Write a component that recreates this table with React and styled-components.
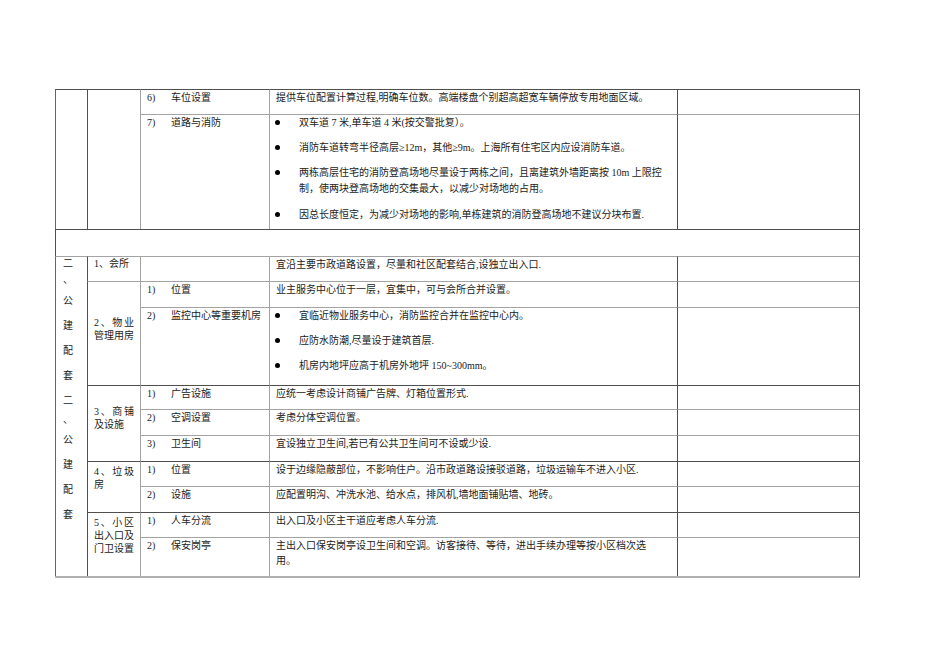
import React from 'react';
import styled, { createGlobalStyle } from 'styled-components';

const GlobalStyle = createGlobalStyle`
  html, body {
    margin: 0;
    padding: 0;
    background: #fff;
  }
`;

const DARK = '#4f4f4f';
const LIGHT = '#a3a3a3';

const Page = styled.div`
  width: 950px;
  height: 672px;
  box-sizing: border-box;
  padding: 89px 0 0 55px;
  font-family: "Liberation Serif", "Noto Sans CJK SC", serif;
  font-size: 10px;
  color: #222;
`;

const Sheet = styled.table`
  border-collapse: separate;
  border-spacing: 0;
  table-layout: fixed;
  width: 804px;
  border-right: 1px solid ${DARK};
  border-bottom: 2px solid #b0b0b0;
`;

const Row = styled.tr`
  height: ${(p) => p.$h}px;
`;

const Cell = styled.td`
  box-sizing: border-box;
  border-top: 1px solid ${(p) => (p.$lightTop ? LIGHT : DARK)};
  border-left: 1px solid ${(p) => (p.$lightLeft ? LIGHT : DARK)};
  padding: 0 6px;
  vertical-align: top;
  line-height: 15px;
  white-space: nowrap;
`;

const SideCell = styled(Cell)`
  padding: 0 0 0 7px;
  border-left-color: #666;
`;

const VChar = styled.span`
  display: block;
  height: ${(p) => p.$h}px;
  line-height: ${(p) => p.$h}px;
`;

const GroupCell = styled(Cell)`
  padding: ${(p) => p.$padTop || 0}px 6px 0 6px;
  line-height: 13px;
  white-space: normal;
  text-align: justify;
  text-justify: inter-character;
  text-align-last: left;
  word-break: break-all;
`;

const Item = styled.div`
  display: flex;
`;

const Num = styled.span`
  width: 24px;
  flex: none;
`;

const Bullets = styled.ul`
  list-style: none;
  margin: 0;
  padding: 0;
`;

const Bullet = styled.li`
  display: flex;
  align-items: flex-start;
  margin-bottom: 10px;

  &:last-child {
    margin-bottom: 0;
  }
`;

const Dot = styled.span`
  flex: none;
  width: 5px;
  height: 5px;
  border-radius: 50%;
  background: #000;
  margin: 5px 19px 0 -1px;
`;

const Lines = styled.span`
  line-height: ${(p) => p.$lh || 15}px;
`;

const Blank = styled(Cell)`
  padding: 0;
`;

const sideChars = [
  ['二', 13], ['、', 19], ['公', 24], ['建', 25], ['配', 25], ['套', 25],
  ['二', 25], ['、', 14], ['公', 25], ['建', 25], ['配', 25], ['套', 25],
];

const ItemLabel = ({ n, children }) => (
  <Item>
    <Num>{n}</Num>
    <span>{children}</span>
  </Item>
);

const BulletList = ({ items }) => (
  <Bullets>
    {items.map((t, i) => (
      <Bullet key={i}>
        <Dot />
        <span>{t}</span>
      </Bullet>
    ))}
  </Bullets>
);

export default function App() {
  return (
    <>
      <GlobalStyle />
      <Page>
        <Sheet>
          <colgroup>
            <col style={{ width: 32 }} />
            <col style={{ width: 53 }} />
            <col style={{ width: 129 }} />
            <col style={{ width: 408 }} />
            <col style={{ width: 182 }} />
          </colgroup>
          <tbody>
            <Row $h={25}>
              <SideCell rowSpan={2} />
              <Cell rowSpan={2} />
              <Cell $lightLeft><ItemLabel n="6)">车位设置</ItemLabel></Cell>
              <Cell $lightLeft>提供车位配置计算过程,明确车位数。高端楼盘个别超高超宽车辆停放专用地面区域。</Cell>
              <Cell />
            </Row>
            <Row $h={115}>
              <Cell $lightTop $lightLeft><ItemLabel n="7)">道路与消防</ItemLabel></Cell>
              <Cell $lightTop $lightLeft>
                <BulletList
                  items={[
                    '双车道 7 米,单车道 4 米(按交警批复）。',
                    '消防车道转弯半径高层≥12m，其他≥9m。上海所有住宅区内应设消防车道。',
                    <Lines $lh={16}>两栋高层住宅的消防登高场地尽量设于两栋之间，且离建筑外墙距离按 10m 上限控<br />制，使两块登高场地的交集最大，以减少对场地的占用。</Lines>,
                    '因总长度恒定，为减少对场地的影响,单栋建筑的消防登高场地不建议分块布置.',
                  ]}
                />
              </Cell>
              <Cell $lightTop />
            </Row>
            <Row $h={27}>
              <Blank colSpan={5} />
            </Row>

            <Row $h={25}>
              <SideCell rowSpan={10} $lightTop>
                {sideChars.map(([c, h], i) => (
                  <VChar key={i} $h={h}>{c}</VChar>
                ))}
              </SideCell>
              <GroupCell $lightTop>1、会所</GroupCell>
              <Cell $lightTop $lightLeft />
              <Cell $lightTop $lightLeft>宜沿主要市政道路设置，尽量和社区配套结合,设独立出入口.</Cell>
              <Cell $lightTop />
            </Row>
            <Row $h={26}>
              <GroupCell rowSpan={2} $padTop={34} $lightTop>2、物业管理用房</GroupCell>
              <Cell $lightTop $lightLeft><ItemLabel n="1)">位置</ItemLabel></Cell>
              <Cell $lightTop $lightLeft>业主服务中心位于一层，宜集中，可与会所合并设置。</Cell>
              <Cell $lightTop />
            </Row>
            <Row $h={78}>
              <Cell $lightTop $lightLeft><ItemLabel n="2)">监控中心等重要机房</ItemLabel></Cell>
              <Cell $lightTop $lightLeft>
                <BulletList
                  items={[
                    '宜临近物业服务中心，消防监控合并在监控中心内。',
                    '应防水防潮,尽量设于建筑首层.',
                    '机房内地坪应高于机房外地坪 150~300mm。',
                  ]}
                />
              </Cell>
              <Cell $lightTop />
            </Row>

            <Row $h={24}>
              <GroupCell rowSpan={3} $padTop={19}>3、商铺及设施</GroupCell>
              <Cell $lightLeft><ItemLabel n="1)">广告设施</ItemLabel></Cell>
              <Cell $lightLeft>应统一考虑设计商铺广告牌、灯箱位置形式.</Cell>
              <Cell />
            </Row>
            <Row $h={26}>
              <Cell $lightTop $lightLeft><ItemLabel n="2)">空调设置</ItemLabel></Cell>
              <Cell $lightTop $lightLeft>考虑分体空调位置。</Cell>
              <Cell $lightTop />
            </Row>
            <Row $h={26}>
              <Cell $lightTop $lightLeft><ItemLabel n="3)">卫生间</ItemLabel></Cell>
              <Cell $lightTop $lightLeft>宜设独立卫生间,若已有公共卫生间可不设或少设.</Cell>
              <Cell $lightTop />
            </Row>

            <Row $h={25}>
              <GroupCell rowSpan={2} $padTop={3}>4、垃圾房</GroupCell>
              <Cell $lightLeft><ItemLabel n="1)">位置</ItemLabel></Cell>
              <Cell $lightLeft>设于边缘隐蔽部位，不影响住户。沿市政道路设接驳道路，垃圾运输车不进入小区.</Cell>
              <Cell />
            </Row>
            <Row $h={26}>
              <Cell $lightTop $lightLeft><ItemLabel n="2)">设施</ItemLabel></Cell>
              <Cell $lightTop $lightLeft>应配置明沟、冲洗水池、给水点，排风机,墙地面铺贴墙、地砖。</Cell>
              <Cell $lightTop />
            </Row>

            <Row $h={25}>
              <GroupCell rowSpan={2} $padTop={3}>5、小区出入口及门卫设置</GroupCell>
              <Cell $lightLeft><ItemLabel n="1)">人车分流</ItemLabel></Cell>
              <Cell $lightLeft>出入口及小区主干道应考虑人车分流.</Cell>
              <Cell />
            </Row>
            <Row $h={39}>
              <Cell $lightTop $lightLeft><ItemLabel n="2)">保安岗亭</ItemLabel></Cell>
              <Cell $lightTop $lightLeft>
                <Lines $lh={14}>主出入口保安岗亭设卫生间和空调。访客接待、等待，进出手续办理等按小区档次选<br />用。</Lines>
              </Cell>
              <Cell $lightTop />
            </Row>
          </tbody>
        </Sheet>
      </Page>
    </>
  );
}
